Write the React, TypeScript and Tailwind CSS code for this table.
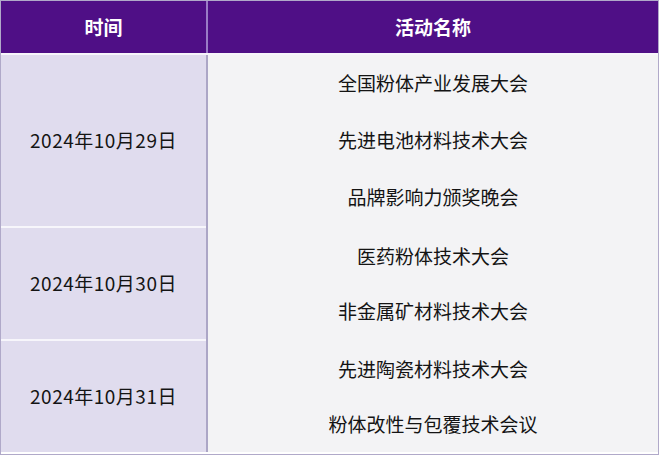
const groups = [
  {
    date: "2024年10月29日",
    height: "h-[171px]",
    events: ["全国粉体产业发展大会", "先进电池材料技术大会", "品牌影响力颁奖晚会"],
  },
  {
    date: "2024年10月30日",
    height: "h-[111px]",
    events: ["医药粉体技术大会", "非金属矿材料技术大会"],
  },
  {
    date: "2024年10月31日",
    height: "h-[111px]",
    events: ["先进陶瓷材料技术大会", "粉体改性与包覆技术会议"],
  },
];

export default function App() {
  return (
    <div
      className="w-[660px] h-[456px] bg-white"
      style={{ fontFamily: '"Noto Sans CJK SC", "Noto Sans", sans-serif' }}
    >
      <div className="w-[659px] h-[455px] border border-[#b0a9c9] flex flex-col">
        <div className="grid grid-cols-[207px_1fr] h-[52px] bg-[#4f0f86] text-white font-bold text-[19px]">
          <div className="flex items-center justify-center border-r-2 border-[#9a7cc6]">时间</div>
          <div className="flex items-center justify-center">活动名称</div>
        </div>
        <div className="h-[2px] bg-[#f7f5fb]" />
        {groups.map((g, i) => (
          <div key={g.date} className="flex flex-col">
            <div className={`grid grid-cols-[207px_1fr] ${g.height}`}>
              <div className="flex items-center justify-center bg-[#e0dcee] border-r-2 border-[#aca6c6] text-[19px] tracking-[0.5px] text-[#141414]">
                {g.date}
              </div>
              <div className="flex flex-col bg-[#f3f3f5]">
                {g.events.map((e) => (
                  <div key={e} className="flex-1 flex items-center justify-center text-[19px] text-[#141414]">
                    {e}
                  </div>
                ))}
              </div>
            </div>
            {i < groups.length - 1 && (
              <div className="grid grid-cols-[207px_1fr] h-[2px]">
                <div className="bg-[#f7f6fb] border-r-2 border-[#aca6c6]" />
                <div className="bg-[#f3f3f5]" />
              </div>
            )}
          </div>
        ))}
      </div>
    </div>
  );
}
